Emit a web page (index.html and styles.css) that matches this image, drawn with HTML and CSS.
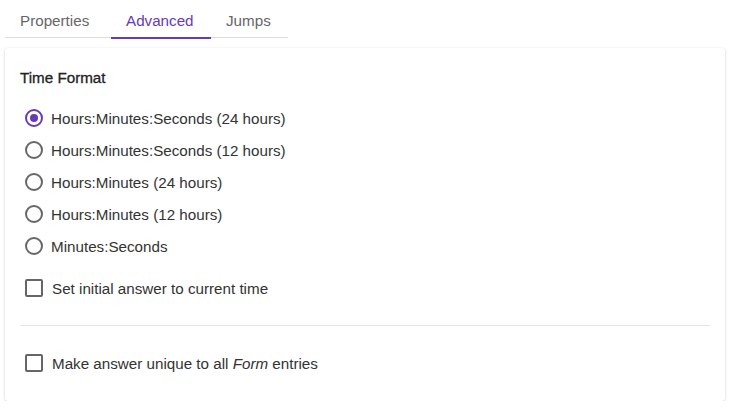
FILE: index.html
```html
<!DOCTYPE html>
<html>
<head>
<meta charset="utf-8">
<link rel="stylesheet" href="styles.css">
</head>
<body>
<div class="page">
  <div class="tabs">
    <div class="tab t1">Properties</div>
    <div class="tab t2 active">Advanced</div>
    <div class="tab t3">Jumps</div>
  </div>
  <div class="card">
    <div class="title">Time Format</div>
    <div class="radios">
      <label class="radio checked"><span class="ring"></span><span>Hours:Minutes:Seconds (24 hours)</span></label>
      <label class="radio"><span class="ring"></span><span>Hours:Minutes:Seconds (12 hours)</span></label>
      <label class="radio"><span class="ring"></span><span>Hours:Minutes (24 hours)</span></label>
      <label class="radio"><span class="ring"></span><span>Hours:Minutes (12 hours)</span></label>
      <label class="radio"><span class="ring"></span><span>Minutes:Seconds</span></label>
    </div>
    <label class="check first"><span class="box"></span><span>Set initial answer to current time</span></label>
    <div class="divider"></div>
    <label class="check second"><span class="box"></span><span>Make answer unique to all <em>Form</em> entries</span></label>
  </div>
</div>
</body>
</html>
```

FILE: styles.css
```css
* { box-sizing: border-box; }
body {
  margin: 0;
  background: #fff;
  font-family: "Liberation Sans", Arial, sans-serif;
  color: #333;
}
.page {
  padding: 0 10px 0 5px;
}
.tabs {
  display: flex;
  width: 283px;
  height: 38px;
  border-bottom: 1px solid #ddd;
}
.tab {
  height: 38px;
  padding: 0 0 0 15px;
  display: flex;
  align-items: center;
  font-size: 15.2px;
  color: #666;
  padding-top: 2px;
}
.t1 { width: 106px; }
.t2 { width: 100px; }
.t3 { width: 77px; }
.tab.active {
  color: #673ab7;
  border-bottom: 2px solid #673ab7;
  margin-bottom: -1px;
  height: 39px;
  padding-top: 3px;
}
.card {
  margin-top: 10px;
  width: 720px;
  height: 353px;
  background: #fff;
  border-radius: 3px;
  box-shadow: 0 1px 3px rgba(0,0,0,0.18), 0 0 1px rgba(0,0,0,0.08);
  padding: 20px 15px 0 15px;
}
.title {
  font-size: 15.2px;
  color: #222;
  line-height: 20px;
  -webkit-text-stroke: 0.3px #222;
}
.radios {
  margin-top: 14px;
  display: flex;
  flex-direction: column;
}
.radio, .check {
  display: flex;
  align-items: center;
  font-size: 15.2px;
  color: #333;
}
.radio { height: 32px; }
.ring {
  width: 18px;
  height: 18px;
  border: 2px solid #666;
  border-radius: 50%;
  margin-left: 5px;
  margin-right: 8px;
  display: flex;
  align-items: center;
  justify-content: center;
}
.radio.checked .ring { border-color: #673ab7; }
.radio.checked .ring::after {
  content: "";
  width: 8px;
  height: 8px;
  border-radius: 50%;
  background: #673ab7;
}
.check { height: 24px; }
.check.first { margin-top: 14px; }
.box {
  width: 18px;
  height: 18px;
  border: 2px solid #666;
  border-radius: 2px;
  margin-left: 5px;
  margin-right: 9px;
}
.divider {
  height: 1px;
  background: #e6e6e6;
  margin: 25px 0 0 0;
}
.check.second { margin-top: 25px; }
em { font-style: italic; }
```
